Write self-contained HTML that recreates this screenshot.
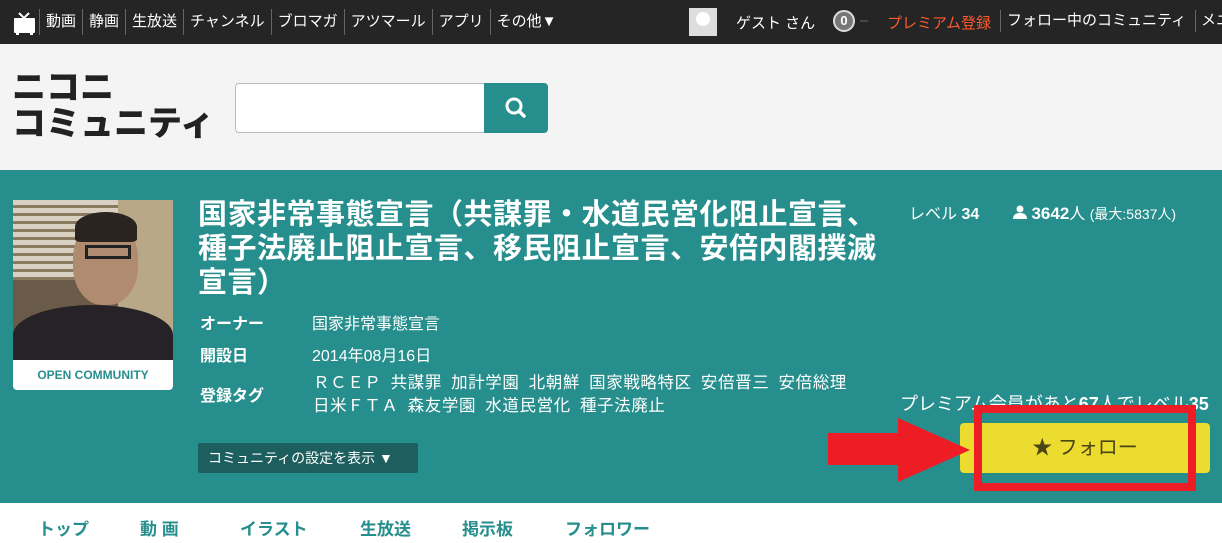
<!DOCTYPE html>
<html><head><meta charset="utf-8"><style>
*{margin:0;padding:0;box-sizing:border-box}
body{width:1222px;height:543px;overflow:hidden;background:#fff;font-family:"Liberation Sans","Noto Sans CJK JP",sans-serif;position:relative}
.top{height:44px;background:#252525;color:#fff;font-size:15px;position:relative;white-space:nowrap}
.top .nav{position:absolute;left:0;top:0;height:44px;display:flex;align-items:center}
.top .nav span{padding:0 6px;border-left:1px solid #666;line-height:26px}
.hdr{height:126px;background:#f4f4f4;position:relative}
.logo{position:absolute;left:12px;top:26px;font-weight:900;font-size:34px;line-height:36px;color:#222}
.search{position:absolute;left:235px;top:39px;width:250px;height:50px;background:#fff;border:1px solid #bbb;border-radius:4px 0 0 4px}
.sbtn{position:absolute;left:484px;top:39px;width:64px;height:50px;background:#268e8c;border-radius:0 4px 4px 0}
.main{position:absolute;left:0;top:170px;width:1222px;height:333px;background:#268e8c;color:#fff}
.pic{position:absolute;left:13px;top:30px;width:160px;height:160px;background:#6a5a48;overflow:hidden}
.lbl{position:absolute;left:13px;top:190px;width:160px;height:30px;background:#fff;border-radius:0 0 4px 4px;color:#268e8c;font-size:12px;font-weight:bold;text-align:center;line-height:30px}
h1{position:absolute;left:198px;top:28px;font-size:29px;line-height:34px;font-weight:bold;white-space:nowrap;letter-spacing:0.5px}
.row{position:absolute;left:200px;font-size:16px;white-space:nowrap}
.row b{display:inline-block;width:112px}
.tog{position:absolute;left:198px;top:273px;width:220px;height:30px;background:#1d5f5e;border-radius:2px;font-size:14px;line-height:30px;padding-left:10px}
.stat{position:absolute;top:30px;font-size:16px;white-space:nowrap}
.prem{position:absolute;left:900px;top:220px;font-size:18px;white-space:nowrap}
.fb{position:absolute;left:960px;top:253px;width:250px;height:50px;background:#ecdc2f;border-radius:4px;color:#4a4514;font-size:20px;text-align:center;line-height:50px}
.tabs{position:absolute;top:515px;left:0;font-size:17px;font-weight:bold;color:#268e8c}
.tabs span{position:absolute;white-space:nowrap}
</style></head><body>
<div class="top">
 <div class="nav">
  <svg width="34" height="30" viewBox="0 0 34 30" style="margin-left:5px"><rect x="9" y="11" width="21" height="15" fill="#fff" rx="1"/><path d="M14 6l5 5 5-5" stroke="#fff" stroke-width="2" fill="none"/><rect x="11" y="25" width="3" height="3" fill="#fff"/><rect x="25" y="25" width="3" height="3" fill="#fff"/></svg>
  <span>動画</span><span>静画</span><span>生放送</span><span>チャンネル</span><span>ブロマガ</span><span>アツマール</span><span>アプリ</span><span>その他▼</span>
 </div>
 <div style="position:absolute;left:689px;top:8px;width:28px;height:28px;background:#ddd"><div style="width:14px;height:14px;border-radius:50%;background:#fff;margin:4px auto 0"></div></div>
 <div style="position:absolute;left:736px;top:12px;font-size:15px">ゲスト さん</div>
 <div style="position:absolute;left:833px;top:10px;width:22px;height:22px;border-radius:50%;background:#777;border:2px solid #ddd;font-size:13px;font-weight:bold;text-align:center;line-height:18px">0</div>
 <div style="position:absolute;left:860px;top:12px;font-size:15px;color:#666">–</div>
 <div style="position:absolute;left:887px;top:12px;font-size:15px;color:#ff5a30">プレミアム登録</div>
 <div style="position:absolute;left:1000px;top:10px;font-size:15px;border-left:1px solid #666;padding-left:6px;line-height:22px">フォロー中のコミュニティ</div>
 <div style="position:absolute;left:1195px;top:10px;font-size:15px;border-left:1px solid #666;padding-left:5px;line-height:22px">メニュー</div>
</div>
<div class="hdr">
 <div class="logo">ニコニ<br>コミュニティ</div>
 <div class="search"></div>
 <div class="sbtn"><svg width="64" height="50" viewBox="0 0 64 50"><circle cx="30" cy="23" r="7" stroke="#fff" stroke-width="3" fill="none"/><path d="M35 28l5 5" stroke="#fff" stroke-width="3.5" stroke-linecap="round"/></svg></div>
</div>
<div class="main">
 <div class="pic">
  <div style="position:absolute;left:0;top:0;width:160px;height:80px;background:repeating-linear-gradient(#d8d0c0 0 5px,#8a7a60 5px 8px)"></div>
  <div style="position:absolute;left:105px;top:0;width:55px;height:160px;background:#b8a888"></div>
  <div style="position:absolute;left:60px;top:20px;width:65px;height:85px;border-radius:45%;background:#b08b70"></div>
  <div style="position:absolute;left:62px;top:12px;width:62px;height:30px;border-radius:50% 50% 10% 10%;background:#2a2420"></div>
  <div style="position:absolute;left:72px;top:45px;width:46px;height:14px;border:3px solid #222"></div>
  <div style="position:absolute;left:0;top:105px;width:160px;height:60px;border-radius:50% 50% 0 0;background:#262228"></div>
 </div>
 <div class="lbl">OPEN COMMUNITY</div>
 <h1>国家非常事態宣言（共謀罪・水道民営化阻止宣言、<br>種子法廃止阻止宣言、移民阻止宣言、安倍内閣撲滅<br>宣言）</h1>
 <div class="row" style="top:140px"><b>オーナー</b>国家非常事態宣言</div>
 <div class="row" style="top:172px"><b>開設日</b>2014年08月16日</div>
 <div class="row" style="top:212px"><b>登録タグ</b></div>
 <div class="row" style="left:313px;top:202px;line-height:23px;word-spacing:4px;letter-spacing:0.6px;font-size:16.5px">ＲＣＥＰ 共謀罪 加計学園 北朝鮮 国家戦略特区 安倍晋三 安倍総理<br>日米ＦＴＡ 森友学園 水道民営化 種子法廃止</div>
 <div class="tog">コミュニティの設定を表示 ▼</div>
 <div class="stat" style="left:909px">レベル <b>34</b></div>
 <div class="stat" style="left:1013px"><svg width="14" height="14" viewBox="0 0 14 14"><circle cx="7" cy="4" r="3.5" fill="#fff"/><path d="M0 14q0-6 7-6t7 6z" fill="#fff"/></svg> <b style="font-size:17px">3642</b>人 <span style="font-size:14px">(最大:5837人)</span></div>
 <div class="prem">プレミアム会員があと<b>67</b>人でレベル<b>35</b></div>
 <div class="fb"><span style="color:#4a4514">★</span> フォロー</div>
</div>
<div style="position:absolute;left:974px;top:405px;width:222px;height:86px;border:8px solid #ee1c25"></div>
<svg style="position:absolute;left:826px;top:416px" width="146" height="68" viewBox="0 0 146 68"><path d="M2 17h70V2l72 32-72 32V49H2z" fill="#ee1c25"/></svg>
<div class="tabs"><span style="left:38px">トップ</span><span style="left:140px">動 画</span><span style="left:240px">イラスト</span><span style="left:360px">生放送</span><span style="left:462px">掲示板</span><span style="left:565px">フォロワー</span></div>
</body></html>
